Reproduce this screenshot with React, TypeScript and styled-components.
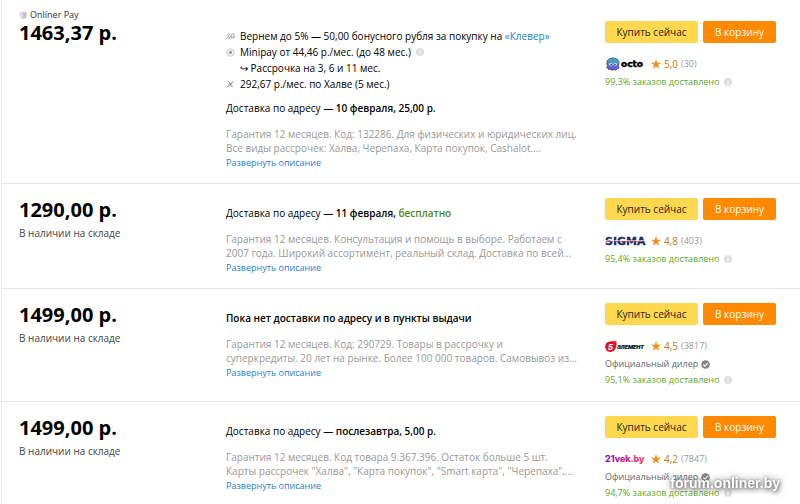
import React from 'react';
import styled, { createGlobalStyle } from 'styled-components';

const GlobalStyle = createGlobalStyle`
  *, *::before, *::after { box-sizing: border-box; }
  body {
    margin: 0;
    background: #fff;
    color: #000;
    font-family: 'Open Sans', 'Noto Sans', sans-serif;
    font-size: 10px;
    line-height: 16px;
    overflow: hidden;
  }
  p, ul { margin: 0; padding: 0; }
  svg { display: block; flex: none; }
`;

const Page = styled.main`
  margin-left: 1px;
  padding-top: 7px;
  border-left: 1px solid #ececec;
`;

const Offer = styled.article`
  display: grid;
  grid-template-columns: 207px minmax(0, 1fr) 171px;
  padding: 0 24px 0 17px;
  border-bottom: 1px solid #e6e6e6;
`;

const PriceColumn = styled.div<{ $tagged?: boolean }>`
  padding-top: ${(p) => (p.$tagged ? 2 : 14)}px;
`;

const PayTag = styled.div`
  display: flex;
  align-items: center;
  gap: 3px;
  font-size: 9px;
  line-height: 12px;
  color: #333;
`;

const Price = styled.div`
  font-size: 20px;
  line-height: 24px;
  font-weight: 700;
`;

const Stock = styled.p`
  margin-top: 3px;
  color: #444;
`;

const InfoColumn = styled.div`
  padding: 21px 0 13px;
  white-space: nowrap;
`;

const Benefits = styled.ul`
  list-style: none;
  margin-bottom: 8px;
`;

const Benefit = styled.li<{ $nested?: boolean }>`
  display: flex;
  align-items: center;
  gap: 5px;
  padding-left: ${(p) => (p.$nested ? 14 : 0)}px;
`;

const Link = styled.a`
  color: #1b7fd0;
  text-decoration: none;
`;

const Delivery = styled.p`
  b { font-weight: 600; }
`;

const Free = styled.b`
  color: #4b8a12;
`;

const Description = styled.p`
  margin-top: 11px;
  line-height: 14px;
  color: #999;
`;

const Expand = styled.a`
  display: block;
  width: max-content;
  margin-top: 1px;
  font-size: 9px;
  line-height: 14px;
  color: #1b7fd0;
  text-decoration: none;
`;

const ShopColumn = styled.div`
  padding: 14px 0 13px;
  white-space: nowrap;
`;

const Actions = styled.div`
  display: grid;
  grid-template-columns: 93px 73px;
  gap: 5px;
  margin-bottom: 13px;
`;

const Button = styled.button<{ $primary?: boolean }>`
  height: 22px;
  padding: 0;
  border: 0;
  border-radius: 2px;
  font: inherit;
  background: ${(p) => (p.$primary ? '#ff8a00' : '#ffd850')};
  color: ${(p) => (p.$primary ? '#fff' : '#222')};
`;

const Rating = styled.div`
  display: flex;
  align-items: center;
  height: 16px;
  margin-bottom: 2px;
  color: #c07a1a;
`;

const Brand = styled.a`
  width: 46px;
`;

const Score = styled.span`
  margin: 0 3px;
`;

const Votes = styled.span`
  font-size: 9px;
  color: #999;
`;

const ShopNote = styled.p<{ $good?: boolean }>`
  display: flex;
  align-items: center;
  gap: ${(p) => (p.$good ? 5 : 3)}px;
  font-size: 9px;
  color: ${(p) => (p.$good ? '#62a81c' : '#666')};
`;

const Watermark = styled.div`
  position: fixed;
  right: 20px;
  bottom: 12px;
  font-family: 'Liberation Sans', sans-serif;
  font-size: 14px;
  line-height: 18px;
  font-weight: 700;
  color: #fff;
  text-shadow: 0 0 3px #777, 1px 2px 4px #777, 0 0 8px #888;
`;

const Shield = () => (
  <svg width="8" height="9" viewBox="0 0 8 9" aria-hidden="true">
    <path d="M4 0.5 7.5 1.6V4.6C7.5 6.6 6 7.9 4 8.6 2 7.9.5 6.6.5 4.6V1.6Z" fill="#dcdce2" />
    <path d="M4 .5 7.5 1.6V4.6C7.5 6.6 6 7.9 4 8.6Z" fill="#c3c3ca" />
  </svg>
);

const Clover = () => (
  <svg width="9" height="8" viewBox="0 0 9 8" fill="none" stroke="#a8a8a8" aria-hidden="true">
    <path d="M1 3.4C2 1 4 1 3.6 3.4M5 3.4C6 1 8.6 1 8.2 3.4M.6 6.6 2.6 3.6 3 6.6 5.4 3.6 5.8 6.6 8.2 3.6V6.6" />
  </svg>
);

const Coin = () => (
  <svg width="9" height="9" viewBox="0 0 9 9" aria-hidden="true">
    <circle cx="4.5" cy="4.5" r="3.8" fill="#eee" stroke="#cfcfcf" />
    <circle cx="4.5" cy="4.5" r="1.4" fill="#8c8c8c" />
  </svg>
);

const Halva = () => (
  <svg width="9" height="8" viewBox="0 0 9 8" fill="none" stroke="#8c8c8c" aria-hidden="true">
    <path d="M2 1.5C4.4 1 3.8 7 6.6 6.4M7.4 1.4C4.8 2 4.6 6 1.4 6.6M2.6 4H6.4" />
  </svg>
);

const Info = () => (
  <svg width="8" height="8" viewBox="0 0 8 8" aria-hidden="true">
    <circle cx="4" cy="4" r="4" fill="#dedede" />
    <path d="M4 1.6V2.6M4 3.4V6.4" stroke="#fff" />
  </svg>
);

const Check = () => (
  <svg width="9" height="9" viewBox="0 0 9 9" aria-hidden="true">
    <circle cx="4.5" cy="4.5" r="4.3" fill="#858585" />
    <path d="M2.4 4.5 4 6.1 6.8 2.9" fill="none" stroke="#fff" strokeWidth="1.2" />
  </svg>
);

const Star = () => (
  <svg width="10" height="10" viewBox="0 0 24 24" fill="#ef921e" aria-hidden="true">
    <path d="M12 0 15 9H24L17 14.4 19.6 23.5 12 18 4.4 23.5 7 14.4 0 9H9Z" />
  </svg>
);

const Octo = () => (
  <svg width="40" height="14" viewBox="0 0 40 14" aria-label="octo">
    <defs>
      <linearGradient id="octo" x2="0" y2="1">
        <stop stopColor="#35bcb4" />
        <stop offset="1" stopColor="#8047d8" />
      </linearGradient>
    </defs>
    <path
      d="M2.6 9.4C.2 3.6 3.8 1 8 1S15.4 3.8 13.4 9.2C14.6 10.4 14 12 12.4 11.6 11 13.6 9.8 13.4 9 12.4 7.6 13.4 6.2 13.4 5.4 12.2 3.6 13 2.4 12 3 10.8 1.2 11.2 1.2 9.8 2.6 9.4Z"
      fill="url(#octo)" stroke="#26375f" strokeWidth=".7"
    />
    <ellipse cx="5.9" cy="7.2" rx="1.7" ry="1.4" fill="#b9e3ff" />
    <ellipse cx="10.3" cy="7.2" rx="1.7" ry="1.4" fill="#b9e3ff" />
    <circle cx="6.2" cy="7.4" r=".7" fill="#222" />
    <circle cx="10" cy="7.4" r=".7" fill="#222" />
    <text x="16" y="10" fontFamily="DejaVu Sans" fontWeight="700" fontSize="9" stroke="#000" strokeWidth=".5">octo</text>
  </svg>
);

const Sigma = () => (
  <svg width="41" height="14" viewBox="0 0 41 14" aria-label="SIGMA">
    <text x="0" y="11" fontFamily="DejaVu Sans" fontWeight="700" fontSize="11" fill="#1d2b60" stroke="#1d2b60" strokeWidth=".3">SIGMA</text>
    <path d="M0 6.5H40" stroke="#fff" strokeWidth=".6" />
    <path d="M1 7.5H8M10 7.5H12M15 7.5H24M26 7.5H39" stroke="#c0455f" strokeWidth=".8" />
  </svg>
);

const FifthElement = () => (
  <svg width="40" height="14" viewBox="0 0 40 14" aria-label="5 элемент">
    <path d="M1 4.4C3 2 7 2.2 11.4 2.2 12.2 7 10.4 13 5.4 13 .6 13-.8 8 1 4.4Z" fill="#d9132b" />
    <text x="3" y="11" fontFamily="Liberation Sans" fontWeight="700" fontStyle="italic" fontSize="9" fill="#fff">5</text>
    <text x="12" y="10" fontFamily="Roboto" fontWeight="900" fontStyle="italic" fontSize="6" fill="#111" stroke="#111" strokeWidth=".2">ЭЛЕМЕНТ</text>
  </svg>
);

const Vek = () => (
  <svg width="40" height="14" viewBox="0 0 40 14" aria-label="21vek.by">
    <defs>
      <linearGradient id="vek">
        <stop stopColor="#8b12b5" />
        <stop offset="1" stopColor="#ea3a5c" />
      </linearGradient>
    </defs>
    <text x="0" y="10" fontFamily="Inter" fontWeight="700" fontSize="9" fill="url(#vek)" stroke="url(#vek)" strokeWidth=".2">21vek.by</text>
  </svg>
);

type OfferData = {
  price: string;
  pay?: boolean;
  delivery: React.ReactNode;
  description: [string, string];
  logo: React.ReactNode;
  score: string;
  votes: string;
  dealer?: boolean;
  delivered: string;
};

const offers: OfferData[] = [
  {
    price: '1463,37',
    pay: true,
    delivery: <>Доставка по адресу — <b>10 февраля, 25,00 р.</b></>,
    description: [
      'Гарантия 12 месяцев. Код: 132286. Для физических и юридических лиц.',
      'Все виды рассрочек: Халва, Черепаха, Карта покупок, Cashalot....',
    ],
    logo: <Octo />, score: '5,0', votes: '30', delivered: '99,3%',
  },
  {
    price: '1290,00',
    delivery: <>Доставка по адресу — <b>11 февраля, </b><Free>бесплатно</Free></>,
    description: [
      'Гарантия 12 месяцев. Консультация и помощь в выборе. Работаем с',
      '2007 года. Широкий ассортимент, реальный склад. Доставка по всей...',
    ],
    logo: <Sigma />, score: '4,8', votes: '403', delivered: '95,4%',
  },
  {
    price: '1499,00',
    delivery: <b>Пока нет доставки по адресу и в пункты выдачи</b>,
    description: [
      'Гарантия 12 месяцев. Код: 290729. Товары в рассрочку и',
      'суперкредиты. 20 лет на рынке. Более 100 000 товаров. Самовывоз из...',
    ],
    logo: <FifthElement />, score: '4,5', votes: '3817', dealer: true, delivered: '95,1%',
  },
  {
    price: '1499,00',
    delivery: <>Доставка по адресу — <b>послезавтра, 5,00 р.</b></>,
    description: [
      'Гарантия 12 месяцев. Код товара 9.367.396. Остаток больше 5 шт.',
      'Карты рассрочек "Халва", "Карта покупок", "Smart карта", "Черепаха",...',
    ],
    logo: <Vek />, score: '4,2', votes: '7847', dealer: true, delivered: '94,7%',
  },
];

export default function App() {
  return (
    <>
      <GlobalStyle />
      <Page>
        {offers.map((o, i) => (
          <Offer key={i}>
            <PriceColumn $tagged={o.pay}>
              {o.pay && <PayTag><Shield />Onlíner Pay</PayTag>}
              <Price>{o.price} р.</Price>
              {!o.pay && <Stock>В наличии на складе</Stock>}
            </PriceColumn>
            <InfoColumn>
              {o.pay && (
                <Benefits>
                  <Benefit><Clover /><span>Вернем до 5% — 50,00 бонусного рубля за покупку на <Link href="#">«Клевер»</Link></span></Benefit>
                  <Benefit><Coin />Minipay от 44,46 р./мес. (до 48 мес.)<Info /></Benefit>
                  <Benefit $nested>↪ Рассрочка на 3, 6 и 11 мес.</Benefit>
                  <Benefit><Halva />292,67 р./мес. по Халве (5 мес.)</Benefit>
                </Benefits>
              )}
              <Delivery>{o.delivery}</Delivery>
              <Description>{o.description[0]}<br />{o.description[1]}</Description>
              <Expand href="#">Развернуть описание</Expand>
            </InfoColumn>
            <ShopColumn>
              <Actions>
                <Button type="button">Купить сейчас</Button>
                <Button type="button" $primary>В корзину</Button>
              </Actions>
              <Rating>
                <Brand href="#">{o.logo}</Brand>
                <Star />
                <Score>{o.score}</Score>
                <Votes>({o.votes})</Votes>
              </Rating>
              {o.dealer && <ShopNote>Официальный дилер<Check /></ShopNote>}
              <ShopNote $good>{o.delivered} заказов доставлено<Info /></ShopNote>
            </ShopColumn>
          </Offer>
        ))}
      </Page>
      <Watermark>forum.onliner.by</Watermark>
    </>
  );
}
